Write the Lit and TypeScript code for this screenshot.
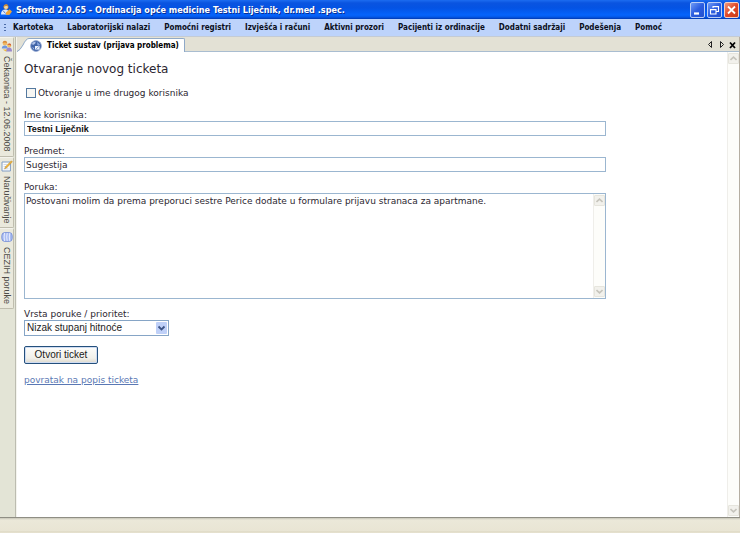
import { LitElement, html, css, svg } from "lit";
import { customElement, property, state } from "lit/decorators.js";

const userIcon = svg`
  <circle cx="5" cy="3" r="2.4" fill="#f4d9a8" stroke="#8a5a20" stroke-width=".5"/>
  <path d="M2.6 2.8Q3 .2 5.4 .3Q7.4 .6 7.3 2.6Q5.4 1.4 2.6 2.8Z" fill="#c98a3a"/>
  <path d="M0 10.4Q0 5.6 4.6 5.6Q8 5.6 8.4 10.4Z" fill="#dfe9fb"/>
  <path d="M5 8.5L8.6 5.2L11 7.4L8.5 10.8L5 10.8Z" fill="#f0a534"/>
  <path d="M2 6.6L4.5 9.5" stroke="#5b80c8" stroke-width="1"/>`;

const globeIcon = svg`
  <circle cx="6" cy="6" r="5.4" fill="#4265a8" stroke="#93a8d2" stroke-width=".8"/>
  <path d="M1.8 4Q3 1.6 5.6 1.8Q6 3.4 4 4.4Q2.8 5 1.8 4Z" fill="#b4c6ea"/>
  <path d="M7 2L10 4.4L9 6L7.4 5Z" fill="#8ba8de"/>
  <path d="M5 6H9.6V9.6H5Z" fill="#eef3fd"/>
  <path d="M5.6 9.4L8.8 6.4" stroke="#6f90cf" stroke-width=".8"/>
  <path d="M2 7L4 8L4.2 10Z" fill="#a9c0ea"/>`;

const peopleIcon = svg`
  <circle cx="4" cy="3.2" r="2.2" fill="#f0b860"/>
  <path d="M1.4 3Q2 .6 4.2 .8Q6 1 6.2 3Q4 2 1.4 3Z" fill="#d8893a"/>
  <path d="M.8 8.6Q.8 5.4 4 5.4Q6.6 5.4 6.6 8.6Z" fill="#6f96dc"/>
  <circle cx="8.2" cy="5.4" r="2" fill="#f2bf62"/>
  <path d="M6.2 5Q7 3 9 3.6Q10.4 4.2 10 5.8Q8.4 4.4 6.2 5Z" fill="#cf5a3a"/>
  <path d="M5 11.4Q5 7.6 8.2 7.6Q11 7.6 11 11.4Z" fill="#9a88cc"/>
  <path d="M1.6 9.4L5 11.4L6 9.4Z" fill="#f0b93e"/>`;

const noteIcon = svg`
  <path d="M1 2H9.4V11H1Z" fill="#fdfdfb" stroke="#7f9cc4" stroke-width="1"/>
  <path d="M2.6 4.5H6M2.6 6.5H5M2.6 8.8H7.6" stroke="#b9c9e2" stroke-width=".7"/>
  <path d="M3.6 8.8L4.4 6.8L10.4 .8L11.4 1.8L5.6 8Z" fill="#f2b53a" stroke="#a87822" stroke-width=".4"/>`;

const dataIcon = svg`
  <rect x=".8" y="1.6" width="10.4" height="8.8" rx="3" fill="#a9bdf2" stroke="#6f88d4" stroke-width=".8"/>
  <path d="M3.6 2Q2.6 6 3.6 10M6.2 2Q5.2 6 6.2 10M8.8 2Q7.8 6 8.8 10" fill="none" stroke="#eef2ff" stroke-width=".9"/>`;

@customElement("xp-scrollbar")
export class XpScrollbar extends LitElement {
  static styles = css`
    :host {
      display: flex;
      flex-direction: column;
      justify-content: space-between;
      flex: none;
      width: 11px;
      padding: 1px 0;
      background: #fdfdfa;
      border-left: 1px solid #efeeea;
    }
    button {
      width: 11px;
      height: 11px;
      padding: 0;
      border: 1px solid #e6e5dd;
      border-radius: 1px;
      background: #f2f1ec;
      display: grid;
      place-items: center;
    }
    svg {
      width: 7px;
      height: 5px;
      display: block;
    }
    path {
      fill: none;
      stroke: #c6c4bc;
      stroke-width: 1.6;
    }
  `;

  render() {
    return html`
      <button aria-label="Gore"><svg viewBox="0 0 7 5"><path d="M.5 4L3.5 1.2L6.5 4" /></svg></button>
      <button aria-label="Dolje"><svg viewBox="0 0 7 5"><path d="M.5 1L3.5 3.8L6.5 1" /></svg></button>
    `;
  }
}

@customElement("title-bar")
export class TitleBar extends LitElement {
  @property() caption = "";

  static styles = css`
    :host {
      display: flex;
      align-items: center;
      gap: 4px;
      height: 19px;
      padding: 0 1px 0 1px;
      box-sizing: border-box;
      background: linear-gradient(#1c6cf0 0, #0a54e0 3px, #0453e4 8px, #0564fc 15px, #0458e8 17px, #0238b0 19px);
    }
    .logo {
      width: 11px;
      height: 11px;
      flex: none;
    }
    h1 {
      flex: 1;
      margin: 0;
      font: bold 9px/18px "DejaVu Sans Condensed", "DejaVu Sans", sans-serif;
      color: #fff;
      text-shadow: 1px 1px 0 #0a2f92;
      white-space: nowrap;
    }
    .controls {
      display: flex;
      gap: 2px;
    }
    button {
      width: 15px;
      height: 16px;
      padding: 0;
      border: 1px solid #b9cdf6;
      border-radius: 2px;
      background: linear-gradient(135deg, #6f9af6, #2a5ce0 50%, #2450cc);
    }
    .close {
      background: linear-gradient(135deg, #f09a7c, #e0492a 50%, #c83a18);
      border-color: #f2cfc6;
    }
    button svg {
      display: block;
      width: 13px;
      height: 14px;
      fill: none;
      stroke: #fff;
    }
  `;

  render() {
    return html`
      <svg class="logo" viewBox="0 0 11 11">${userIcon}</svg>
      <h1>${this.caption}</h1>
      <div class="controls">
        <button aria-label="Minimiziraj">
          <svg viewBox="0 0 13 14"><path d="M3 10.5H8" stroke-width="2.2" /></svg>
        </button>
        <button aria-label="Vrati">
          <svg viewBox="0 0 13 14"><path d="M5 5V3.5H10.5V8.5H8.5M5 3.6H10.5M2.5 6.5H8V11H2.5ZM2.5 6.6H8" stroke-width="1.1" /></svg>
        </button>
        <button class="close" aria-label="Zatvori">
          <svg viewBox="0 0 13 14"><path d="M3 3.5L10 10.5M10 3.5L3 10.5" stroke-width="1.8" /></svg>
        </button>
      </div>
    `;
  }
}

@customElement("menu-bar")
export class MenuBar extends LitElement {
  @property({ attribute: false }) items: string[] = [];

  static styles = css`
    :host {
      display: flex;
      align-items: center;
      height: 17px;
      padding-left: 4px;
      background: #bdd3fb;
      border-bottom: 1px solid #c4cbd4;
    }
    .grip {
      width: 2px;
      height: 8px;
      margin-right: 7px;
      background: repeating-linear-gradient(#4d6ca8 0 1px, transparent 1px 3px);
    }
    nav {
      display: flex;
      gap: 14px;
    }
    button {
      padding: 0;
      border: 0;
      background: none;
      font: bold 8px/16px "DejaVu Sans Condensed", "DejaVu Sans", sans-serif;
      color: #0b0f1c;
      white-space: nowrap;
    }
  `;

  render() {
    return html`
      <span class="grip"></span>
      <nav>${this.items.map((item) => html`<button>${item}</button>`)}</nav>
    `;
  }
}

@customElement("side-tabs")
export class SideTabs extends LitElement {
  static styles = css`
    :host {
      display: flex;
      flex-direction: column;
      flex: none;
      width: 16px;
      box-sizing: border-box;
      background: #e3e4d6;
      border-right: 1px solid #bcbcb0;
    }
    button {
      display: flex;
      align-items: center;
      gap: 4px;
      width: 14px;
      padding: 2px 0 4px;
      border: 1px solid #bfbdae;
      border-left: 0;
      border-top-color: #f4f3ec;
      border-radius: 0 2px 2px 0;
      background: #eae9dc;
      writing-mode: vertical-rl;
      font: 9px/13px "Liberation Sans", sans-serif;
      color: #4d4c48;
      white-space: nowrap;
    }
    svg {
      width: 12px;
      height: 12px;
      flex: none;
    }
  `;

  render() {
    const tabs = [
      { icon: peopleIcon, text: "Čekaonica - 12.06.2008" },
      { icon: noteIcon, text: "Naručivanje" },
      { icon: dataIcon, text: "CEZIH poruke" },
    ];
    return tabs.map((t) => html`<button><svg viewBox="0 0 12 12">${t.icon}</svg>${t.text}</button>`);
  }
}

@customElement("tab-strip")
export class TabStrip extends LitElement {
  static styles = css`
    :host {
      display: flex;
      align-items: flex-end;
      justify-content: space-between;
      height: 15px;
      background: #e3e1d5;
      box-shadow: inset 0 -1px #a9bdd0;
    }
    .tab {
      display: flex;
      align-items: stretch;
      height: 14px;
      padding: 0;
      border: 0;
      background: none;
      color: #000;
    }
    .slope {
      width: 12px;
      height: 14px;
      display: block;
    }
    .face {
      display: flex;
      align-items: center;
      gap: 5px;
      padding: 0 5px 0 1px;
      border-top: 1px solid #8fa9c8;
      border-right: 1px solid #8fa9c8;
      border-radius: 0 2px 0 0;
      background: #fff;
      font: bold 8px/13px "DejaVu Sans Condensed", "DejaVu Sans", sans-serif;
      white-space: nowrap;
    }
    .face svg {
      width: 12px;
      height: 12px;
    }
    .tools {
      display: flex;
      gap: 2px;
      align-items: center;
      padding-right: 2px;
      height: 15px;
    }
    .tools button {
      width: 9px;
      height: 11px;
      padding: 0;
      border: 0;
      background: none;
    }
    .tools svg {
      display: block;
      width: 9px;
      height: 11px;
      fill: none;
      stroke: #222;
    }
  `;

  render() {
    return html`
      <button class="tab">
        <svg class="slope" viewBox="0 0 12 14">
          <path d="M0 14Q3 12.5 6 7Q9 .5 12 .5V14Z" fill="#fff" />
          <path d="M0 13.5Q3 12.5 6 7Q9 .5 12 .5" fill="none" stroke="#8fa9c8" />
        </svg>
        <span class="face"><svg viewBox="0 0 12 12">${globeIcon}</svg>Ticket sustav (prijava problema)</span>
      </button>
      <div class="tools">
        <button aria-label="Prethodna kartica"><svg viewBox="0 0 9 11"><path d="M5.5 2.5V8.5L2.5 5.5Z" /></svg></button>
        <button aria-label="Sljedeća kartica"><svg viewBox="0 0 9 11"><path d="M3.5 2.5V8.5L6.5 5.5Z" /></svg></button>
        <button aria-label="Zatvori karticu"><svg viewBox="0 0 9 11"><path d="M2 3.5L7 9M7 3.5L2 9" stroke="#000" stroke-width="1.8" /></svg></button>
      </div>
    `;
  }
}

@customElement("ticket-form")
export class TicketForm extends LitElement {
  @state() onBehalf = false;

  static styles = css`
    :host {
      display: block;
      flex: 1;
      min-width: 0;
      padding: 9px 7px;
      font: 9px/12px "DejaVu Sans", sans-serif;
      color: #2b2630;
    }
    h2 {
      margin: 0;
      font-size: 12px;
      font-weight: normal;
      line-height: 16px;
    }
    .check {
      display: flex;
      align-items: center;
      gap: 2px;
      margin: 10px 0 10px 2px;
    }
    .check input {
      appearance: none;
      width: 10px;
      height: 10px;
      margin: 0;
      border: 1px solid #54799f;
      background: #f6f6f3;
    }
    .check input:checked {
      background: #3a9a3a;
    }
    .field {
      display: flex;
      flex-direction: column;
      max-width: 582px;
      margin-bottom: 9px;
    }
    .text {
      height: 15px;
      padding: 0 1px;
    }
    .text,
    .area {
      box-sizing: border-box;
      border: 1px solid #9bb6d0;
      background: #fff;
      font: inherit;
      color: inherit;
    }
    .name {
      padding: 0 2px;
      font-family: "Liberation Sans", sans-serif;
      font-weight: bold;
      color: #111;
    }
    .area {
      display: flex;
      height: 106px;
    }
    textarea {
      flex: 1;
      min-width: 0;
      padding: 1px;
      border: 0;
      outline: 0;
      resize: none;
      overflow: hidden;
      background: none;
      font: inherit;
      color: inherit;
    }
    .choice {
      position: relative;
      display: flex;
      width: 145px;
    }
    select {
      appearance: none;
      width: 100%;
      height: 16px;
      padding: 0 2px;
      border: 1px solid #86a5c6;
      border-radius: 0;
      background: #fff;
      font: 10px/14px "Liberation Sans", sans-serif;
      color: #1c1c1c;
    }
    .arrow {
      position: absolute;
      top: 2px;
      right: 2px;
      width: 11px;
      height: 12px;
      background: #bfd0f8;
      border-radius: 1px;
      pointer-events: none;
    }
    .submit {
      display: block;
      width: 74px;
      height: 18px;
      margin: 10px 0;
      padding: 0;
      border: 1px solid #24507c;
      border-radius: 2px;
      background: linear-gradient(#fdfdfb, #f1f0ea 70%, #dcd8cc);
      box-shadow: inset 0 0 0 1px #cfdcf2;
      font: 10px/14px "Liberation Sans", sans-serif;
      color: #1a1a1a;
    }
    a {
      color: #5a78b4;
    }
  `;

  render() {
    return html`
      <h2>Otvaranje novog ticketa</h2>
      <label class="check">
        <input type="checkbox" .checked=${this.onBehalf}
          @change=${(e: Event) => (this.onBehalf = (e.target as HTMLInputElement).checked)} />
        Otvoranje u ime drugog korisnika
      </label>
      <div class="field">
        <label for="name">Ime korisnika:</label>
        <input id="name" class="text name" value="Testni Liječnik" />
      </div>
      <div class="field">
        <label for="subject">Predmet:</label>
        <input id="subject" class="text" value="Sugestija" />
      </div>
      <div class="field">
        <label for="message">Poruka:</label>
        <div class="area">
          <textarea id="message" .value=${"Postovani molim da prema preporuci sestre Perice dodate u formulare prijavu stranaca za apartmane."}></textarea>
          <xp-scrollbar></xp-scrollbar>
        </div>
      </div>
      <div class="field">
        <label for="priority">Vrsta poruke / prioritet:</label>
        <span class="choice">
          <select id="priority"><option>Nizak stupanj hitnoće</option></select>
          <svg class="arrow" viewBox="0 0 11 12"><path d="M2.5 4.5L5.5 7.5L8.5 4.5" fill="none" stroke="#3c5486" stroke-width="1.8" /></svg>
        </span>
      </div>
      <button class="submit">Otvori ticket</button>
      <a href="#">povratak na popis ticketa</a>
    `;
  }
}

@customElement("app-root")
export class AppRoot extends LitElement {
  static styles = css`
    :host {
      display: flex;
      flex-direction: column;
      min-height: 100vh;
      background: #e3e1d5;
    }
    .body {
      flex: 1;
      display: flex;
    }
    .main {
      flex: 1;
      min-width: 0;
      display: flex;
      flex-direction: column;
      border-right: 1px solid #b5aea2;
      border-left: 1px solid #f4f4ee;
    }
    .page {
      flex: 1;
      display: flex;
      background: #fff;
    }
    .status {
      height: 15px;
      border-top: 1px solid #8f8e84;
      background: linear-gradient(#c8c6b8 0, #ebe8d9 2px, #e9e5d4 13px, #dad5bf 14px, #efebdc 15px);
    }
  `;

  render() {
    return html`
      <title-bar caption="Softmed 2.0.65 - Ordinacija opće medicine Testni Liječnik, dr.med .spec."></title-bar>
      <menu-bar .items=${[
        "Kartoteka",
        "Laboratorijski nalazi",
        "Pomoćni registri",
        "Izvješća i računi",
        "Aktivni prozori",
        "Pacijenti iz ordinacije",
        "Dodatni sadržaji",
        "Podešenja",
        "Pomoć",
      ]}></menu-bar>
      <div class="body">
        <side-tabs></side-tabs>
        <main class="main">
          <tab-strip></tab-strip>
          <div class="page">
            <ticket-form></ticket-form>
            <xp-scrollbar></xp-scrollbar>
          </div>
        </main>
      </div>
      <footer class="status"></footer>
    `;
  }
}
